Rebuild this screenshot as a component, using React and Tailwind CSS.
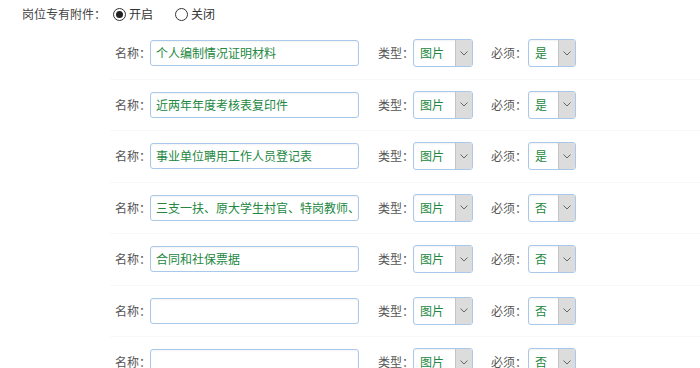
import { useState } from "react";

const ROWS = [
  { name: "个人编制情况证明材料", type: "图片", required: "是" },
  { name: "近两年年度考核表复印件", type: "图片", required: "是" },
  { name: "事业单位聘用工作人员登记表", type: "图片", required: "是" },
  { name: "三支一扶、原大学生村官、特岗教师、", type: "图片", required: "否" },
  { name: "合同和社保票据", type: "图片", required: "否" },
  { name: "", type: "图片", required: "否" },
  { name: "", type: "图片", required: "否" },
];

function FakeSelect({ value, width }) {
  return (
    <div
      className={`flex h-[28px] shrink-0 ${width} overflow-hidden rounded-[3px] border border-[#a9c8ea] bg-white shadow-[inset_0_1px_2px_rgba(0,0,0,0.06)]`}
    >
      <div className="flex flex-1 items-center whitespace-nowrap pl-[6px] text-[12px] text-[#23883f]">{value}</div>
      <div className="flex w-[17px] items-center justify-center border-l border-[#c4c4c4] bg-[#dcdcdc]">
        <svg width="8" height="5" viewBox="0 0 8 5">
          <path d="M0.5 0.5 L4 4 L7.5 0.5" fill="none" stroke="#666" strokeWidth="1" />
        </svg>
      </div>
    </div>
  );
}

function Radio({ checked, label, onClick }) {
  return (
    <button type="button" onClick={onClick} className="flex items-center gap-[3px]">
      <span className="flex h-[13px] w-[13px] items-center justify-center rounded-full border border-[#333] bg-white">
        {checked ? <span className="h-[7px] w-[7px] rounded-full bg-[#222]" /> : null}
      </span>
      <span className="whitespace-nowrap text-[12px] text-[#333]">{label}</span>
    </button>
  );
}

export default function App() {
  const [enabled, setEnabled] = useState(true);

  return (
    <div
      className="h-[368px] w-[700px] overflow-hidden bg-white text-[12px] text-[#555]"
      style={{ fontFamily: '"Noto Sans CJK SC", "Noto Sans", sans-serif' }}
    >
      <div className="flex h-[28px] items-center pl-[22px]">
        <span className="w-[91px] whitespace-nowrap text-[#444]">岗位专有附件：</span>
        <div className="flex items-center gap-[22px]">
          <Radio checked={enabled} label="开启" onClick={() => setEnabled(true)} />
          <Radio checked={!enabled} label="关闭" onClick={() => setEnabled(false)} />
        </div>
      </div>
      <div className="ml-[110px]">
        {ROWS.map((row, i) => (
          <div
            key={i}
            className="flex h-[51.5px] items-center border-b border-[#f7f9f7] pl-[5px]"
          >
            <span className="w-[35px] shrink-0 whitespace-nowrap text-[#555]">名称：</span>
            <div className="flex h-[26px] w-[209px] shrink-0 items-center overflow-hidden rounded-[3px] border border-[#a9c8ea] bg-white pl-[5px] text-[12px] text-[#23883f] shadow-[inset_0_1px_2px_rgba(0,0,0,0.05)]">
              <span className="overflow-hidden whitespace-nowrap">{row.name}</span>
            </div>
            <span className="ml-[19px] w-[35px] shrink-0 whitespace-nowrap text-[#555]">类型：</span>
            <FakeSelect value={row.type} width="w-[60px]" />
            <span className="ml-[18px] w-[37px] shrink-0 whitespace-nowrap text-[#555]">必须：</span>
            <FakeSelect value={row.required} width="w-[48px]" />
          </div>
        ))}
      </div>
    </div>
  );
}
